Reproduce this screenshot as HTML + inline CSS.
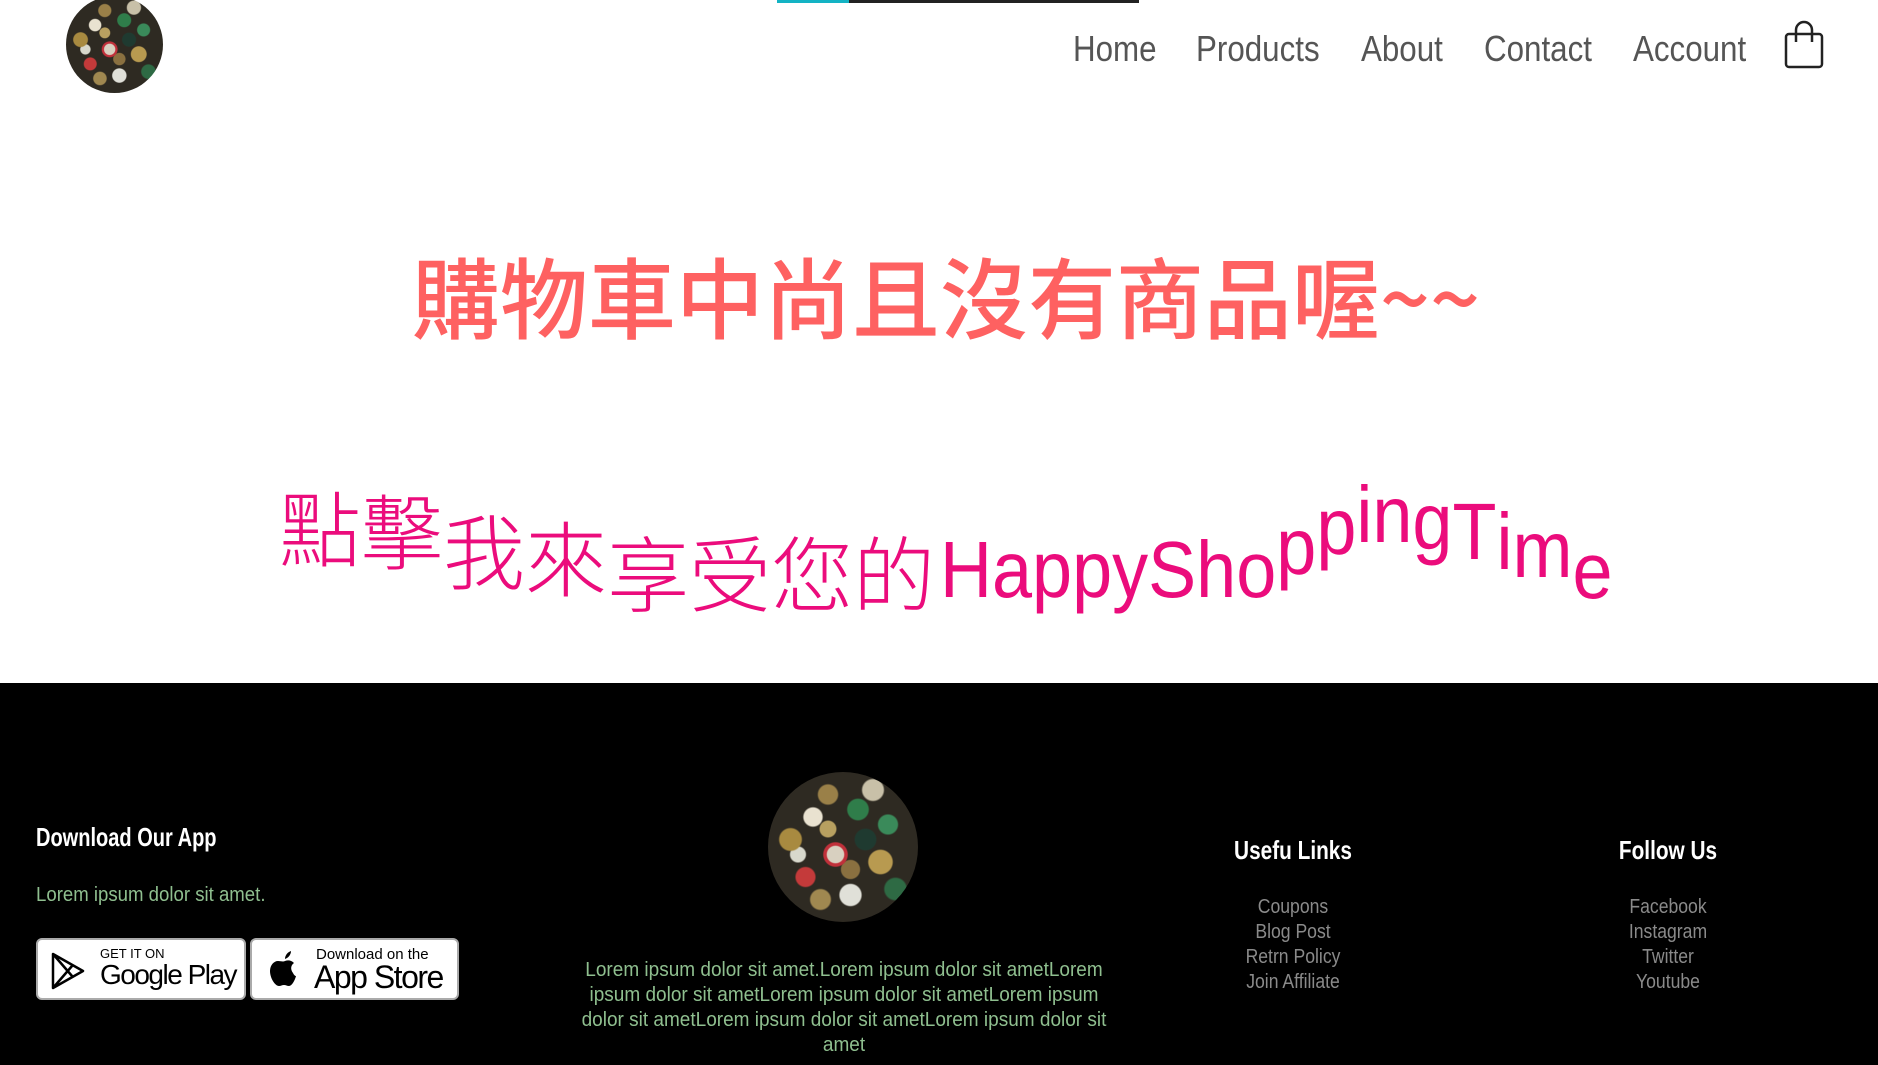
<!DOCTYPE html>
<html><head><meta charset="utf-8">
<style>
*{margin:0;padding:0;box-sizing:border-box}
body{width:1878px;height:1065px;overflow:hidden;background:#fff;position:relative;font-family:"Liberation Sans","Noto Sans CJK TC",sans-serif}
.abs{position:absolute}
.caps{border-radius:50%;background:
radial-gradient(circle at 30% 30%,#e9e2d0 0 6%,transparent 7%),
radial-gradient(circle at 60% 25%,#2f7d4a 0 7%,transparent 8%),
radial-gradient(circle at 45% 55%,#d8d0c0 0 7%,#c0303a 8% 10%,transparent 11%),
radial-gradient(circle at 75% 60%,#b89a50 0 8%,transparent 9%),
radial-gradient(circle at 25% 70%,#c43a3a 0 6%,transparent 7%),
radial-gradient(circle at 55% 82%,#e0e0d8 0 7%,transparent 8%),
radial-gradient(circle at 80% 35%,#3a8a5a 0 6%,transparent 7%),
radial-gradient(circle at 15% 45%,#a88a40 0 7%,transparent 8%),
radial-gradient(circle at 40% 15%,#9a8048 0 6%,transparent 7%),
radial-gradient(circle at 65% 45%,#1f3a30 0 8%,transparent 9%),
radial-gradient(circle at 40% 38%,#b8a060 0 6%,transparent 7%),
radial-gradient(circle at 85% 78%,#2e6a44 0 6%,transparent 7%),
radial-gradient(circle at 20% 55%,#d8d8cc 0 5%,transparent 6%),
radial-gradient(circle at 55% 65%,#8a7040 0 7%,transparent 8%),
radial-gradient(circle at 70% 12%,#c8c0a8 0 6%,transparent 7%),
radial-gradient(circle at 35% 85%,#a08850 0 6%,transparent 7%),
#2e2a22}
.nav{font-size:36px;color:#555;top:26px;line-height:46px;transform:scaleX(.87);transform-origin:left;white-space:nowrap}
.wave span{display:inline-block;position:relative}
.ft{color:#fff;font-weight:bold;font-size:26px;transform:scaleX(.8);white-space:nowrap}
.lk{color:#8a8a8a;font-size:20px;line-height:25px;text-align:center;width:300px;transform:scaleX(.88)}
.badge{background:#fff;border:2px solid #aaa;border-radius:6px;height:62px;color:#000}
</style></head><body>
<div class="abs" style="left:777px;top:0;width:72px;height:3px;background:#13b3c4"></div>
<div class="abs" style="left:849px;top:0;width:290px;height:3px;background:#222"></div>
<div class="abs caps" style="left:66px;top:-4px;width:97px;height:97px"></div>
<div class="abs nav" style="left:1073px">Home</div>
<div class="abs nav" style="left:1196px">Products</div>
<div class="abs nav" style="left:1361px">About</div>
<div class="abs nav" style="left:1484px">Contact</div>
<div class="abs nav" style="left:1633px">Account</div>
<svg class="abs" style="left:1783px;top:20px" width="42" height="50" viewBox="0 0 42 50"><rect x="3" y="14" width="36" height="33" rx="3" fill="none" stroke="#222" stroke-width="2.5"/><path d="M13 22V10a8 8 0 0 1 16 0v12" fill="none" stroke="#222" stroke-width="2.5"/></svg>

<div class="abs" style="left:0;width:1892px;top:240px;text-align:center;font-size:88px;font-weight:500;line-height:110px;color:#fe6161;font-family:'Noto Sans CJK TC',sans-serif">購物車中尚且沒有商品喔~~</div>

<div class="abs wave" style="left:279px;top:520px;font-size:82px;line-height:100px;color:#eb0c7c;white-space:nowrap;font-family:'Noto Sans CJK TC',sans-serif;font-weight:300"><span style="top:-45px">點</span><span style="top:-42px">擊</span><span style="top:-22px">我</span><span style="top:-15px">來</span><span>享</span><span>受</span><span>您</span><span>的</span></div>
<div class="abs wave" style="left:940px;top:520px;font-size:80px;line-height:100px;color:#eb0c7c;white-space:nowrap;transform:scaleX(.9);transform-origin:left;font-family:'Liberation Sans',sans-serif"><span>H</span><span>a</span><span>p</span><span>p</span><span>y</span><span>S</span><span>h</span><span>o</span><span style="top:-23px">p</span><span style="top:-43px">p</span><span style="top:-55px">i</span><span style="top:-55px">n</span><span style="top:-48px">g</span><span style="top:-38px">T</span><span style="top:-28px">i</span><span style="top:-20px">m</span><span style="top:1px">e</span></div>

<div class="abs" style="left:0;top:683px;width:1878px;height:382px;background:#000"></div>
<div class="abs ft" style="left:36px;top:822px;transform:scaleX(.77);transform-origin:left">Download Our App</div>
<div class="abs" style="left:36px;top:884px;font-size:20px;color:#8fbf8f;transform:scaleX(.93);transform-origin:left;white-space:nowrap">Lorem ipsum dolor sit amet.</div>
<div class="abs badge" style="left:36px;top:938px;width:210px">
<svg class="abs" style="left:12px;top:12px" width="36" height="38" viewBox="0 0 36 38"><path d="M3 2L33 19L3 36Z M3 2L22 24 M3 36L22 14" fill="none" stroke="#000" stroke-width="2.5" stroke-linejoin="round"/></svg>
<div class="abs" style="left:62px;top:6px;font-size:13px">GET IT ON</div>
<div class="abs" style="left:62px;top:19px;font-size:28px;letter-spacing:-1.5px">Google Play</div></div>
<div class="abs badge" style="left:250px;top:938px;width:209px">
<svg class="abs" style="left:16px;top:10px" width="34" height="40" viewBox="0 0 34 40"><path d="M17 11c3-1 6-1 9 2-3 2-4 6-1 10 1 2 2 3 3 3-1 4-4 10-7 10-2 0-3-1-5-1s-3 1-5 1C7 36 2 28 2 21c0-6 4-10 8-10 3 0 5 1 7 0zM17 9c0-4 3-7 6-8 0 4-3 7-6 8z" fill="#000"/></svg>
<div class="abs" style="left:64px;top:6px;font-size:15px">Download on the</div>
<div class="abs" style="left:62px;top:19px;font-size:32px;letter-spacing:-1.5px">App Store</div></div>

<div class="abs caps" style="left:768px;top:772px;width:150px;height:150px"></div>
<div class="abs" style="left:494px;top:958px;width:700px;text-align:center;font-size:20px;line-height:25px;color:#8fbf8f;transform:scaleX(.95)">Lorem ipsum dolor sit amet.Lorem ipsum dolor sit ametLorem<br>ipsum dolor sit ametLorem ipsum dolor sit ametLorem ipsum<br>dolor sit ametLorem ipsum dolor sit ametLorem ipsum dolor sit<br>amet</div>

<div class="abs ft" style="left:1143px;top:835px;width:300px;text-align:center">Usefu Links</div>
<div class="abs lk" style="left:1143px;top:895px">Coupons<br>Blog Post<br>Retrn Policy<br>Join Affiliate</div>
<div class="abs ft" style="left:1518px;top:835px;width:300px;text-align:center">Follow Us</div>
<div class="abs lk" style="left:1518px;top:895px">Facebook<br>Instagram<br>Twitter<br>Youtube</div>
</body></html>
